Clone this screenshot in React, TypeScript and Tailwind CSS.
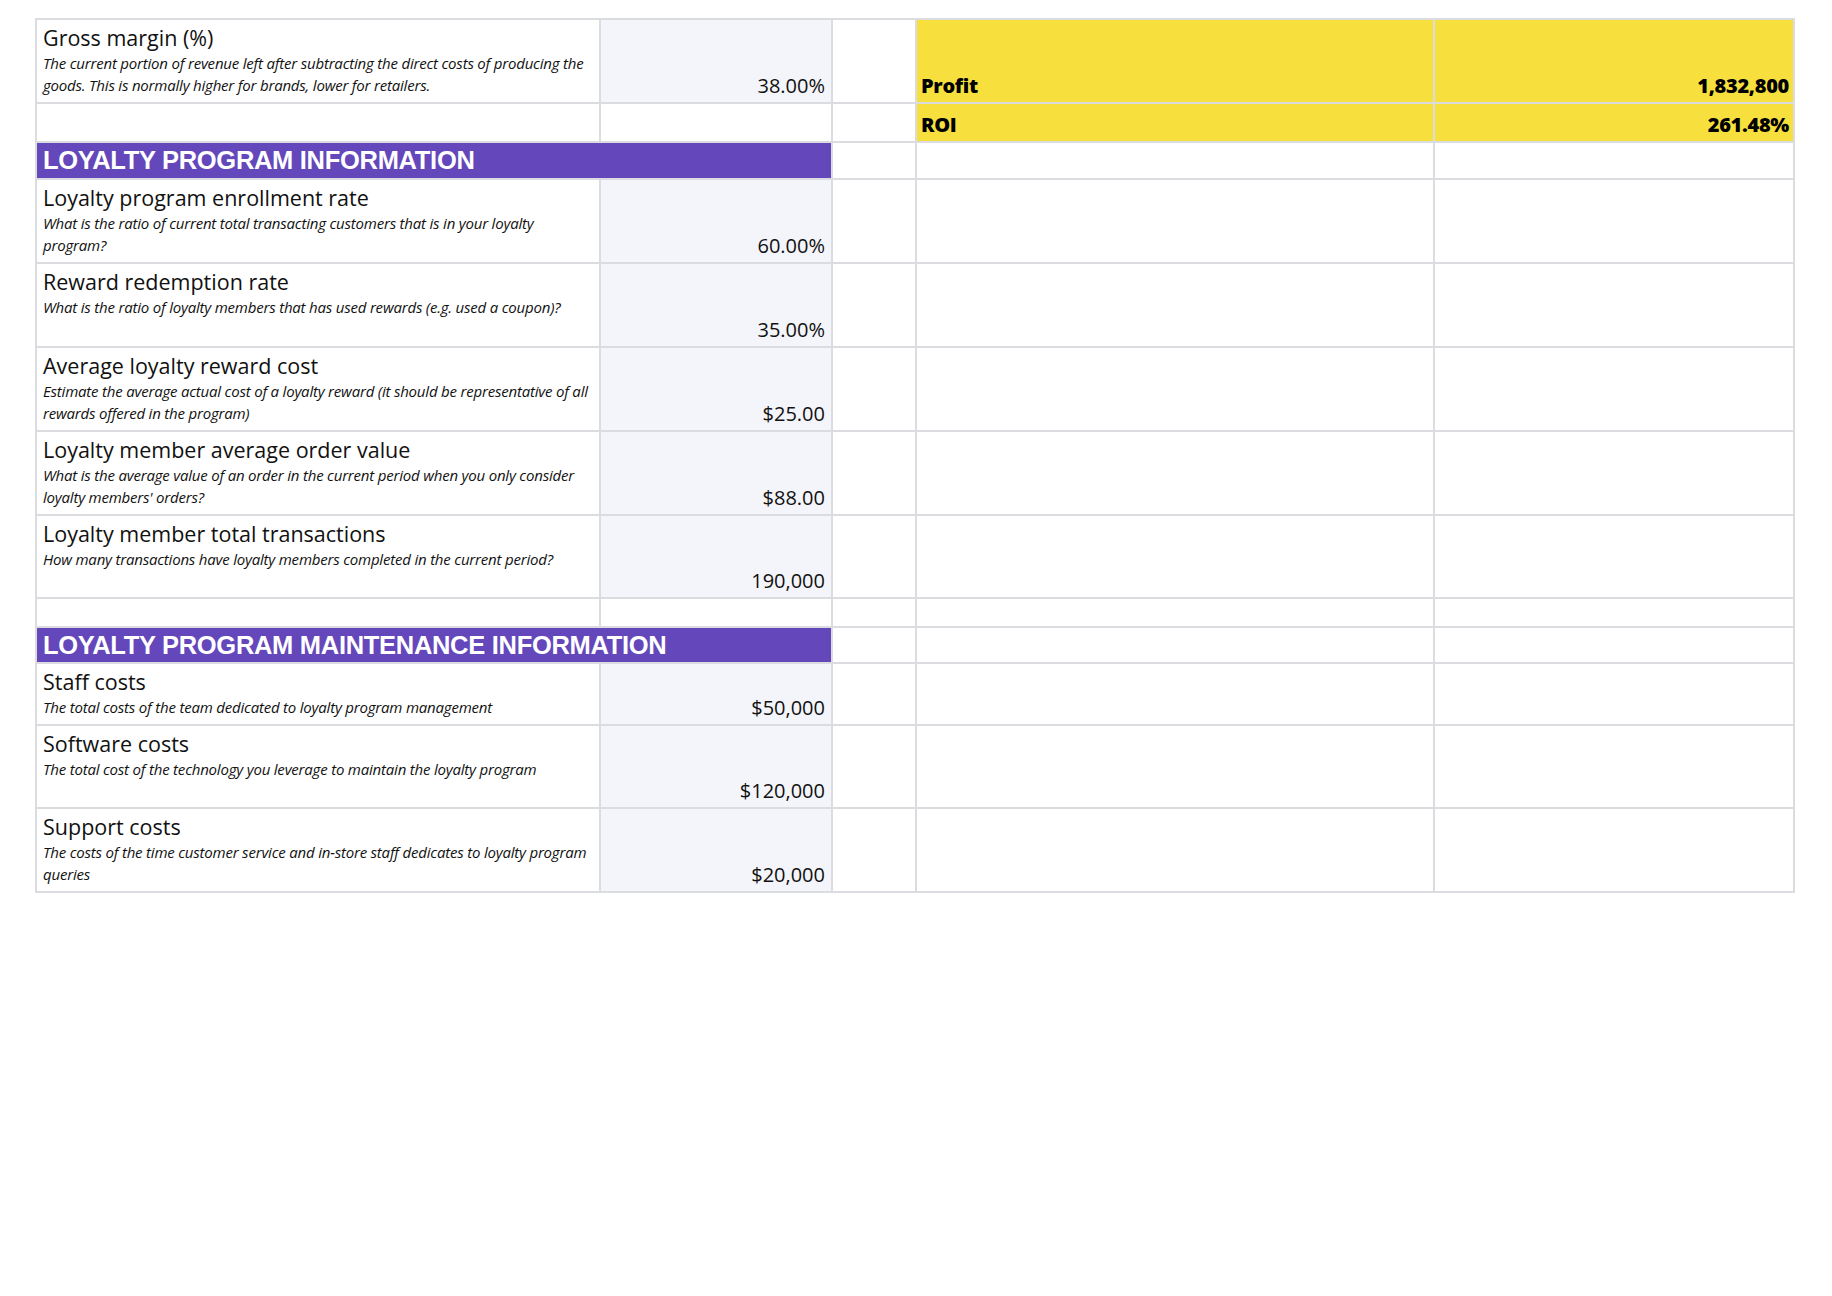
import React from "react";

const B = "border-r-2 border-b-2 border-[#dadce0]";

function Row({ h, title, desc, value, purple, c4, c5, yellow }: { h: string; title?: string; desc?: string; value?: string; purple?: string; c4?: string; c5?: string; yellow?: boolean }) {
  const y = yellow ? "bg-[#f7e03d]" : "bg-white";
  return (
    <div className={`flex ${h}`}>
      {purple ? (
        <div className={`w-[796px] bg-[#6447ba] ${B} flex items-center px-[6px]`}>
          <span className="text-white font-bold text-[25.5px] tracking-[-0.3px]" style={{ fontFamily: '"Liberation Sans", Arial, sans-serif' }}>{purple}</span>
        </div>
      ) : (
        <>
          <div className={`w-[564px] ${B} px-[6px] pt-[3px]`}>
            {title && <div className="text-[21.5px] leading-[29px] text-[#111]">{title}</div>}
            {desc && <div className="text-[15px] leading-[22px] italic text-[#111] tracking-[-0.2px]">{desc}</div>}
          </div>
          <div className={`w-[232px] ${B} ${title ? "bg-[#f4f5fa]" : "bg-white"} flex items-end justify-end px-[6px] pb-[1px]`}>
            <span className="text-[20px] text-[#111]">{value}</span>
          </div>
        </>
      )}
      <div className={`w-[84px] ${B}`} />
      <div className={`w-[518px] ${B} ${y} flex items-end px-[4px] pb-[1px]`}>
        <span className="text-[20px] font-extrabold text-black tracking-[-0.3px]">{c4}</span>
      </div>
      <div className={`w-[360px] ${B} ${y} flex items-end justify-end px-[4px] pb-[1px]`}>
        <span className="text-[20px] font-extrabold text-black tracking-[-0.3px]">{c5}</span>
      </div>
    </div>
  );
}

export default function App() {
  return (
    <div className="w-[1832px] h-[1296px] bg-white" style={{ fontFamily: '"Open Sans", "Noto Sans", sans-serif' }}>
      <div className="pt-[18px] pl-[35px]">
        <div className="w-fit border-l-2 border-t-2 border-[#dadce0]">
          <Row h="h-[84px]" title="Gross margin (%)" desc="The current portion of revenue left after subtracting the direct costs of producing the goods. This is normally higher for brands, lower for retailers." value="38.00%" c4="Profit" c5="1,832,800" yellow />
          <Row h="h-[39px]" c4="ROI" c5="261.48%" yellow />
          <Row h="h-[37px]" purple="LOYALTY PROGRAM INFORMATION" />
          <Row h="h-[84px]" title="Loyalty program enrollment rate" desc="What is the ratio of current total transacting customers that is in your loyalty program?" value="60.00%" />
          <Row h="h-[84px]" title="Reward redemption rate" desc="What is the ratio of loyalty members that has used rewards (e.g. used a coupon)?" value="35.00%" />
          <Row h="h-[84px]" title="Average loyalty reward cost" desc="Estimate the average actual cost of a loyalty reward (it should be representative of all rewards offered in the program)" value="$25.00" />
          <Row h="h-[84px]" title="Loyalty member average order value" desc="What is the average value of an order in the current period when you only consider loyalty members' orders?" value="$88.00" />
          <Row h="h-[83px]" title="Loyalty member total transactions" desc="How many transactions have loyalty members completed in the current period?" value="190,000" />
          <Row h="h-[29px]" />
          <Row h="h-[36px]" purple="LOYALTY PROGRAM MAINTENANCE INFORMATION" />
          <Row h="h-[62px]" title="Staff costs" desc="The total costs of the team dedicated to loyalty program management" value="$50,000" />
          <Row h="h-[83px]" title="Software costs" desc="The total cost of the technology you leverage to maintain the loyalty program" value="$120,000" />
          <Row h="h-[84px]" title="Support costs" desc="The costs of the time customer service and in-store staff dedicates to loyalty program queries" value="$20,000" />
        </div>
      </div>
    </div>
  );
}
